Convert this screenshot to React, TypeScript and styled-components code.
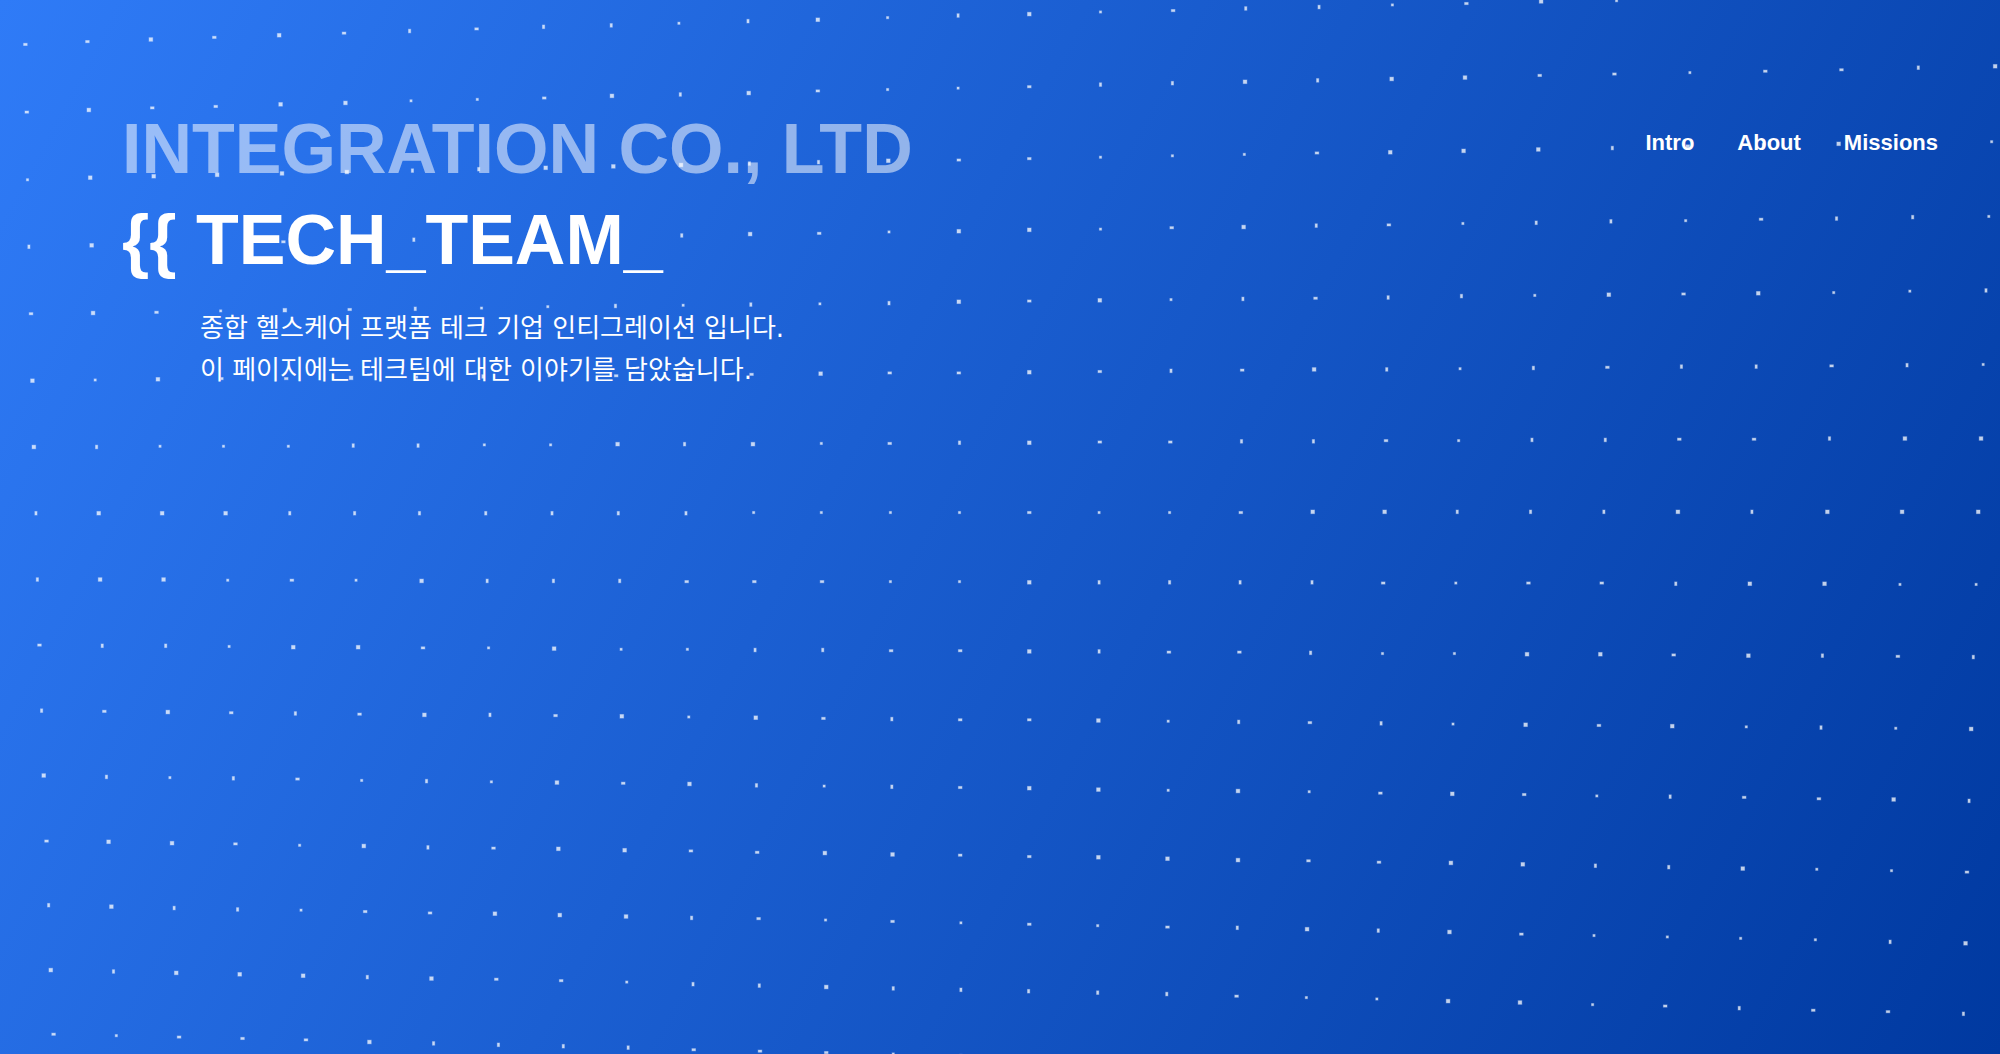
import React from "react";
import styled, { createGlobalStyle } from "styled-components";

const GlobalStyle = createGlobalStyle`
  * {
    box-sizing: border-box;
  }
  body {
    margin: 0;
    background: #003a9c;
    font-family: "Liberation Sans", Helvetica, Arial, "Noto Sans CJK KR", sans-serif;
  }
`;

const Page = styled.div`
  position: relative;
  min-height: 100vh;
  overflow: hidden;
  color: #ffffff;
  background: linear-gradient(118deg, #2f7bf7 0%, #0039a0 100%);
`;

const Field = styled.svg`
  position: absolute;
  inset: 0;
  width: 100%;
  height: 100%;
  pointer-events: none;
`;

const Header = styled.header`
  position: relative;
  display: flex;
  justify-content: space-between;
  align-items: flex-start;
  padding: 104px 62px 0 122px;
`;

const Title = styled.h1`
  margin: 0;
  font-size: 70px;
  line-height: 91px;
  font-weight: 700;
`;

const TitleLine = styled.span<{ $faded?: boolean }>`
  display: block;
  color: ${(p) => (p.$faded ? "rgba(255, 255, 255, 0.52)" : "#ffffff")};
`;

const Nav = styled.nav`
  display: flex;
  gap: 43px;
  padding-top: 25px;
`;

const NavLink = styled.a`
  font-size: 22px;
  line-height: 28px;
  font-weight: 700;
  color: inherit;
  text-decoration: none;
`;

const Lead = styled.p`
  position: relative;
  margin: 21px 0 0;
  padding-left: 200px;
  font-family: "DejaVu Sans", "Noto Sans CJK KR", sans-serif;
  font-size: 26px;
  line-height: 42px;
  font-weight: 400;
`;

type Node = [number, number];

/* Control points of the dot sheet: one line per row, one point per column. */
const COLS = [0, 9, 18, 28];
const ROWS = [1, 7, 14];
const SHEET: Node[][] = [
  [[26.5, 112], [612, 96], [1245, 81.8], [1995, 66.3]],
  [[35.8, 513.3], [618.5, 513], [1241, 512.2], [1978.3, 511.5]],
  [[51, 970], [627, 982.4], [1236.3, 996], [1963.5, 1014]],
];
const UNIT = 1.41;

const weights = (knots: number[], t: number) =>
  knots.map((k, i) =>
    knots.reduce((w, other, j) => (i === j ? w : (w * (t - other)) / (k - other)), 1)
  );

const pointAt = (col: number, row: number): Node => {
  const wc = weights(COLS, col);
  const wr = weights(ROWS, row);
  let x = 0;
  let y = 0;
  SHEET.forEach((line, r) =>
    line.forEach(([px, py], c) => {
      x += px * wr[r] * wc[c];
      y += py * wr[r] * wc[c];
    })
  );
  return [x, y];
};

/* Each dot covers one or two cells of the coarse raster, depending on where it falls. */
const snap = (v: number) => {
  const start = Math.ceil(v / UNIT - 0.75 - 0.5);
  const end = Math.floor(v / UNIT + 0.75 - 0.5);
  return { from: start * UNIT, size: (end - start + 1) * UNIT };
};

const dots = Array.from({ length: 16 * 29 }, (_, i) => {
  const [x, y] = pointAt(i % 29, Math.floor(i / 29));
  return { h: snap(x), v: snap(y) };
});

const DotField = () => (
  <Field viewBox="0 0 2000 1054" preserveAspectRatio="xMidYMid slice" aria-hidden="true">
    {dots.map(({ h, v }, i) => (
      <g key={i} fill="#ffffff">
        <rect x={h.from - 0.9} y={v.from - 0.9} width={h.size + 1.8} height={v.size + 1.8} opacity={0.3} />
        <rect x={h.from - 0.4} y={v.from - 0.4} width={h.size + 0.8} height={v.size + 0.8} opacity={0.65} />
      </g>
    ))}
  </Field>
);

const LINKS = ["Intro", "About", "Missions"];

export default function App() {
  return (
    <Page>
      <GlobalStyle />
      <DotField />
      <Header>
        <Title>
          <TitleLine $faded>INTEGRATION CO., LTD</TitleLine>
          <TitleLine>{"{{ TECH_TEAM_"}</TitleLine>
        </Title>
        <Nav>
          {LINKS.map((label) => (
            <NavLink key={label} href={`#${label.toLowerCase()}`}>
              {label}
            </NavLink>
          ))}
        </Nav>
      </Header>
      <Lead lang="ko">
        종합 헬스케어 프랫폼 테크 기업 인티그레이션 입니다.
        <br />
        이 페이지에는 테크팀에 대한 이야기를 담았습니다.
      </Lead>
    </Page>
  );
}
